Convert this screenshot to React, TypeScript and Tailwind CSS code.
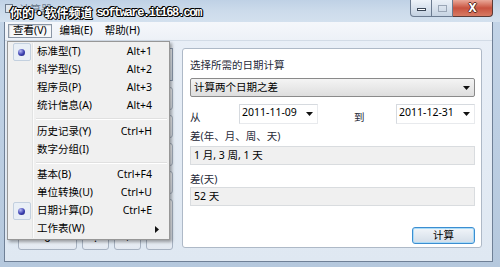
import type { ReactNode } from 'react'

// 보기 메뉴 항목: 구분선은 null
type MenuItem = { label: string; key?: string; checked?: boolean; sub?: boolean } | null

const MENU: MenuItem[] = [
  { label: '标准型(T)', key: 'Alt+1', checked: true },
  { label: '科学型(S)', key: 'Alt+2' },
  { label: '程序员(P)', key: 'Alt+3' },
  { label: '统计信息(A)', key: 'Alt+4' },
  null,
  { label: '历史记录(Y)', key: 'Ctrl+H' },
  { label: '数字分组(I)' },
  null,
  { label: '基本(B)', key: 'Ctrl+F4' },
  { label: '单位转换(U)', key: 'Ctrl+U' },
  { label: '日期计算(D)', key: 'Ctrl+E', checked: true },
  { label: '工作表(W)', sub: true },
]

const KEYS: { t: string; span?: string }[] = [
  { t: 'MC' }, { t: 'MR' }, { t: 'MS' }, { t: 'M+' }, { t: 'M-' },
  { t: '←' }, { t: 'CE' }, { t: 'C' }, { t: '±' }, { t: '√' },
  { t: '7' }, { t: '8' }, { t: '9' }, { t: '/' }, { t: '%' },
  { t: '4' }, { t: '5' }, { t: '6' }, { t: '*' }, { t: '1/x' },
  { t: '1' }, { t: '2' }, { t: '3' }, { t: '-' }, { t: '=', span: 'row-span-2' },
  { t: '0', span: 'col-span-2' }, { t: '.' }, { t: '+' },
]

function Arrow() {
  return (
    <svg width="7" height="4" viewBox="0 0 7 4" className="shrink-0">
      <path d="M0 0h7L3.5 4z" fill="#111" />
    </svg>
  )
}

function Label({ children, className = '' }: { children: ReactNode; className?: string }) {
  return <div className={`h-[14px] leading-[14px] text-[#1f2a38] ${className}`}>{children}</div>
}

function DateBox({ value }: { value: string }) {
  return (
    <div className="flex h-[20px] w-[79px] items-center justify-between border border-[#d6dadf] border-r-[#e8eaed] border-b-[#e8eaed] bg-white pl-[2px] pr-[4px] text-black">
      <span className="-mt-[2px]">{value}</span>
      <Arrow />
    </div>
  )
}

function ReadBox({ value }: { value: string }) {
  return (
    <div className="flex h-[19px] items-center border border-[#d9dcdf] bg-[#f0f0f0] pl-[3px] text-black">
      {value}
    </div>
  )
}

function ViewMenu() {
  return (
    <div className="absolute left-[7px] top-[41px] flex h-[199px] w-[163px] flex-col border border-[#979797] bg-[#f0f0f0] p-[1px] shadow-[2px_2px_3px_rgba(0,0,0,0.35)]">
      <div className="pointer-events-none absolute bottom-[1px] left-[24px] top-[1px] w-[2px] border-l border-[#e2e3e3] bg-white/70" />
      {MENU.map((m, i) =>
        m === null ? (
          <div key={i} className={`flex items-center pl-[27px] pr-[1px] ${i === 4 ? 'h-[8px]' : 'h-[7px]'}`}>
            <div className="h-[2px] w-full border-t border-[#e0e0e0] bg-white" />
          </div>
        ) : (
          <div key={i} className="relative flex h-[18px] items-center text-black">
            <div className="flex w-[24px] justify-center">
              {m.checked && (
                <div className="ml-[1px] flex h-[18px] w-[18px] items-center justify-center rounded-[2px] border border-[#c3d0df] bg-[#e9eff6]">
                  <div className="h-[7px] w-[7px] rounded-full bg-[radial-gradient(circle_at_35%_30%,#b9bcf5,#3a3fb0_55%,#1d2170)]" />
                </div>
              )}
            </div>
            <span className="pl-[4px]">{m.label}</span>
            {m.key && <span className="ml-auto pr-[16px]">{m.key}</span>}
            {m.sub && (
              <svg width="4" height="7" viewBox="0 0 4 7" className="ml-auto mr-[9px]">
                <path d="M0 0l4 3.5L0 7z" fill="#111" />
              </svg>
            )}
          </div>
        ),
      )}
    </div>
  )
}

function WindowButtons() {
  return (
    <div className="mr-[7px] flex h-[17px] self-start">
      <div className="flex w-[22px] items-center justify-center rounded-bl-[4px] border border-t-0 border-[#6b7b90] bg-gradient-to-b from-[#eef3f9] to-[#c3d1e1]">
        <div className="mt-[3px] h-[3px] w-[9px] border border-[#3a4656] bg-white" />
      </div>
      <div className="flex w-[21px] items-center justify-center border border-l-0 border-t-0 border-[#6b7b90] bg-gradient-to-b from-[#eaf0f7] to-[#c6d3e2]">
        <div className="h-[7px] w-[9px] border border-[#9aa6b6] bg-transparent" />
      </div>
      <div className="flex w-[40px] items-center justify-center rounded-br-[4px] border border-l-0 border-t-0 border-[#5b3a36] bg-gradient-to-b from-[#e9a899] via-[#c8523f] to-[#d77a63]">
        <span className="text-[12px] font-bold leading-none text-white [text-shadow:1px_0_#5a2a22,-1px_0_#5a2a22,0_1px_#5a2a22,0_-1px_#5a2a22]">
          X
        </span>
      </div>
    </div>
  )
}

export default function App() {
  return (
    <div className="relative flex h-[267px] w-[500px] flex-col overflow-hidden bg-gradient-to-b from-[#c4d5e8] to-[#b5c8dd] text-[10.5px] [font-family:'Noto_Sans','Noto_Sans_CJK_SC',sans-serif]">
      {/* 제목 표시줄 */}
      <div className="relative flex h-[22px] items-start bg-gradient-to-b from-[#bfd1e5] via-[#ccdbeb] to-[#d3e0ee]">
        <div className="ml-[5px] mt-[4px] h-[9px] w-[8px] border border-[#6d7c8e] bg-[#dfe6ee]" />
        <span className="ml-[6px] mt-[2px] text-[11px] text-[#2c3a4a]/60">计算器</span>
        <div className="ml-auto" />
        <WindowButtons />
        <div className="absolute left-[10px] top-[6px] flex items-center font-bold text-white [text-shadow:1px_0_#000,-1px_0_#000,0_1px_#000,0_-1px_#000,1px_1px_#000,-1px_-1px_#000]">
          <span className="text-[12px] leading-[15px]">你的</span>
          <span className="mx-[3px] text-[12px] leading-[15px]">•</span>
          <span className="text-[12px] leading-[15px]">软件频道</span>
          <span className="ml-[4px] text-[12px] leading-[15px] tracking-[-1.4px] [font-family:'Liberation_Mono',monospace]!">
            software.it168.com
          </span>
        </div>
      </div>

      {/* 클라이언트 영역 */}
      <div className="mb-[5px] ml-[4px] mr-[7px] flex flex-1 flex-col border-x border-b border-[#6f8096] bg-gradient-to-b from-[#e9eff7] to-[#dfe8f2]">
        <div className="flex h-[19px] items-center border-b border-[#d2dbe6] bg-gradient-to-b from-[#f5f7fb] to-[#edf1f7] pl-[3px] text-black">
          <div className="flex h-[14px] items-center border border-[#8a96a6] bg-[#f7f8fa] px-[4px] shadow-[inset_1px_1px_1px_rgba(0,0,0,0.12)]">
            查看(V)
          </div>
          <div className="px-[8px]">编辑(E)</div>
          <div className="px-[4px]">帮助(H)</div>
        </div>

        <div className="flex flex-1 pl-[13px]">
          {/* 계산기 (메뉴 뒤에 가려짐) */}
          <div className="flex w-[155px] flex-col">
            <div className="mt-[7px] h-[33px] border border-[#8e9cb0] bg-gradient-to-b from-[#f4f8fc] to-[#dbe5f1]" />
            <div className="mt-[6px] grid grid-cols-[repeat(5,27px)] grid-rows-[repeat(6,23px)] gap-[5px]">
              {KEYS.map((k) => (
                <div
                  key={k.t}
                  className={`flex items-center justify-center rounded-[3px] border border-[#a7b2c1] bg-gradient-to-b from-[#f7f9fc] to-[#e3e9f1] text-[11px] text-black ${k.span ?? ''}`}
                >
                  {k.t}
                </div>
              ))}
            </div>
          </div>

          {/* 날짜 계산 패널 */}
          <div className="ml-auto mr-[10px] mt-[7px] flex h-[200px] w-[300px] flex-col rounded-[3px] border border-[#aeb9c7] bg-white pl-[7px] pr-[6px] pt-[9px]">
            <Label>选择所需的日期计算</Label>
            <div className="mt-[6px] flex h-[19px] items-center justify-between rounded-[2px] border border-[#8a8a8a] bg-gradient-to-b from-[#f4f4f4] to-[#dedede] pl-[3px] pr-[4px] text-black">
              <span>计算两个日期之差</span>
              <Arrow />
            </div>
            <div className="mt-[7px] flex items-end">
              <Label className="w-[49px] pb-[1px]">从</Label>
              <DateBox value="2011-11-09" />
              <Label className="ml-[36px] w-[42px] pb-[1px]">到</Label>
              <DateBox value="2011-12-31" />
            </div>
            <Label className="mt-[5px]">差(年、月、周、天)</Label>
            <div className="mt-[3px]">
              <ReadBox value="1 月, 3 周, 1 天" />
            </div>
            <Label className="mt-[7px]">差(天)</Label>
            <div className="mt-[1px]">
              <ReadBox value="52 天" />
            </div>
            <div className="mt-[21px] flex h-[17px] w-[63px] items-center justify-center self-end rounded-[3px] border border-[#3c8ed1] bg-gradient-to-b from-[#f1f5f9] to-[#d3dde8] text-black shadow-[inset_0_0_0_1px_#a9dbf8]">
              计算
            </div>
          </div>
        </div>
      </div>

      <ViewMenu />
    </div>
  )
}
